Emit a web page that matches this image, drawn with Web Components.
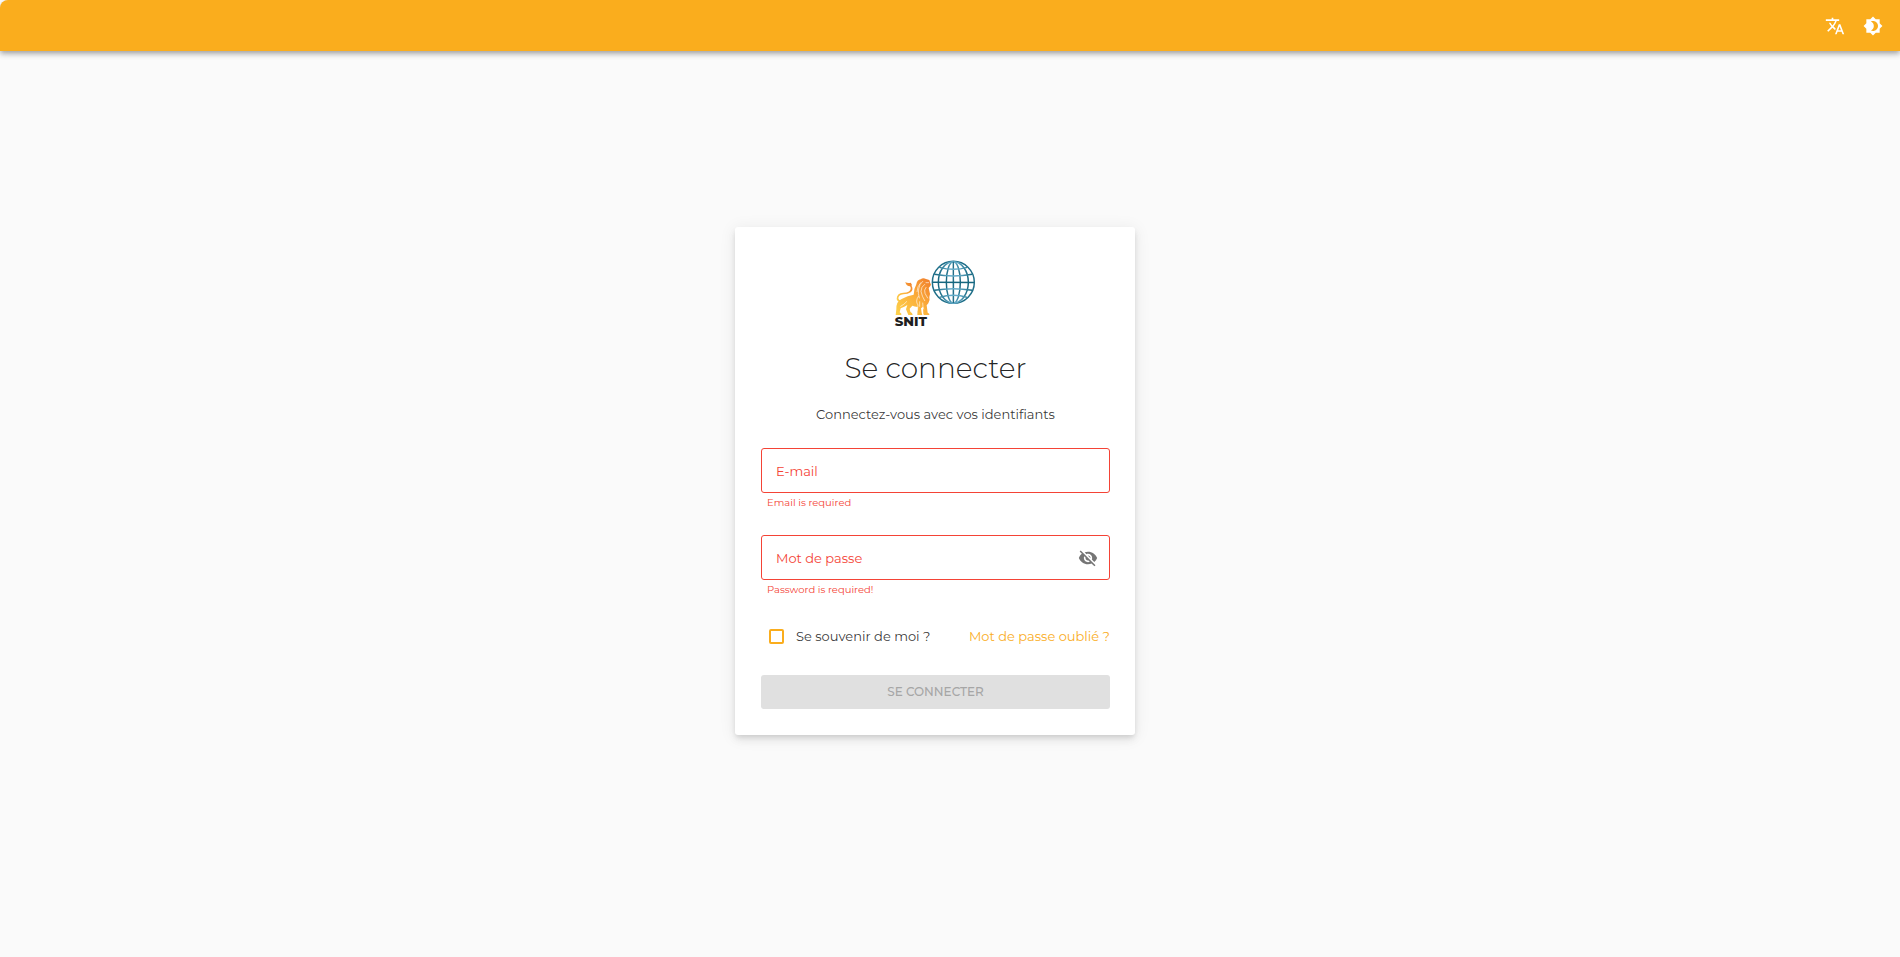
<!DOCTYPE html>
<html lang="fr">
<head>
<meta charset="utf-8">
<meta name="viewport" content="width=device-width, initial-scale=1">
<title>SNIT – Se connecter</title>
<style>
  html { background: #fff; }
  body {
    margin: 0;
    font-family: Montserrat, Inter, "Open Sans", sans-serif;
    font-size: 13px;
    line-height: 20px;
    color: rgba(0, 0, 0, .8);
    --primary: #faad1d;
    --error: #f44336;
  }
</style>
</head>
<body>
<login-page></login-page>

<script>
const define = (name, html, setup) =>
  customElements.define(name, class extends HTMLElement {
    constructor() {
      super();
      const t = document.createElement('template');
      t.innerHTML = html;
      this.attachShadow({ mode: 'open' }).append(t.content.cloneNode(true));
    }
    connectedCallback() { if (setup) setup(this, this.shadowRoot); }
  });

define('icon-button', `
  <style>
    :host { display: block; }
    button { display: flex; padding: 9px; border: 0; background: none; color: inherit; cursor: pointer; border-radius: 50%; }
    svg { width: 20px; height: 20px; fill: currentColor; }
  </style>
  <button type="button"><svg viewBox="0 0 24 24" aria-hidden="true"><path/></svg></button>`,
  (host, root) => {
    root.querySelector('path').setAttribute('d', host.getAttribute('path'));
    root.querySelector('button').setAttribute('aria-label', host.getAttribute('label'));
  });

define('top-bar', `
  <style>
    :host {
      display: flex; justify-content: flex-end; align-items: center;
      height: 51px; padding: 0 8px; box-sizing: border-box;
      background: var(--primary); color: #fff; border-top-left-radius: 8px;
      box-shadow: 0 2px 4px -1px rgba(0,0,0,.2), 0 4px 5px rgba(0,0,0,.14), 0 1px 10px rgba(0,0,0,.12);
    }
  </style>
  <slot></slot>`);

define('snit-logo', `
  <style>
    :host { display: block; }
    svg { display: block; width: 82px; height: 68px; }
    text { font-family: Montserrat, Inter, sans-serif; font-weight: 800; font-size: 40px; fill: #1e1e1e; }
  </style>
  <svg viewBox="45 29 246 204" overflow="visible" role="img" aria-label="SNIT">
    <defs>
      <linearGradient id="fur" x1="0" y1="1" x2="1" y2="0">
        <stop offset="0" stop-color="#fdd34c"/><stop offset=".5" stop-color="#fbb03b"/><stop offset="1" stop-color="#f07c2b"/>
      </linearGradient>
      <linearGradient id="sea">
        <stop offset="0" stop-color="#16677f"/><stop offset=".42" stop-color="#65acc9"/>
        <stop offset=".65" stop-color="#62a9c6"/><stop offset="1" stop-color="#16677f"/>
      </linearGradient>
    </defs>
    <g fill="none" stroke="url(#sea)" stroke-width="4.4">
      <circle cx="220" cy="96" r="63" stroke="#1f6f89"/>
      <ellipse cx="220" cy="96" rx="45" ry="62"/>
      <ellipse cx="220" cy="96" rx="21" ry="62"/>
      <path d="M220 34 220.2 158" stroke="#246f89"/>
      <path d="M158 96 282 96.2" stroke="#16677f"/>
      <path d="M163 72Q220 82 277 72M163 120Q220 110 277 120M178 51Q220 63 262 51M178 141Q220 129 262 141"/>
    </g>
    <path d="M76 95Q82 99 92 97Q97 101 95 107Q101 118 92 126Q84 132 70 132Q56 134 55 144Q56 151 64 150L67 155Q52 157 50 146Q50 128 70 127Q90 127 92 116Q93 112 90 108Q79 108 76 95Z" fill="url(#fur)"/>
    <path d="M47 194L49 177Q48 153 65 146Q83 136 101 133Q102 114 109 102Q111 89 122 87Q129 81 138 86L148 89L151 99Q155 102 151 107L146 113L148 122Q152 130 148 140Q151 150 145 159L140 165L143 187Q150 190 148 194H132L130 191L129 169L123 174L125 187L127 194H112L113 170Q103 169 97 166L89 175L91 184Q98 188 98 194H85L78 177L82 164Q74 169 62 174L59 186Q66 190 64 194Z" fill="url(#fur)"/>
    <g fill="none" stroke="#fff" stroke-width="1.8" stroke-linecap="round">
      <path d="M128 93Q118 101 116 116Q113 129 118 143M134 102Q123 109 123 123Q126 138 134 151M138 111Q131 119 135 129L143 143M122 97Q111 109 111 124M115 138Q105 153 114 164L112 180M119 154V168M128 158Q128 170 131 176M80 154Q72 163 62 168M138 97H146"/>
    </g>
    <text x="44" y="226">SNIT</text>
  </svg>`);

define('login-field', `
  <style>
    :host { display: block; }
    .box { display: grid; grid-template-columns: 1fr auto; align-items: center; height: 45px; box-sizing: border-box; border: 1px solid var(--error); border-radius: 3px; }
    input { grid-area: 1 / 1; min-width: 0; height: 43px; box-sizing: border-box; border: 0; outline: 0; background: none; padding: 0 14px; font: inherit; color: inherit; }
    label { grid-area: 1 / 1; padding-left: 14px; color: var(--error); pointer-events: none; }
    input:focus + label, input:valid + label { visibility: hidden; }
    slot { display: block; grid-area: 1 / 2; padding-right: 2px; color: #757575; }
    p { margin: 0; padding: 2px 6px 0; height: 42px; box-sizing: border-box; font-size: 10px; line-height: 16px; color: var(--error); }
  </style>
  <div class="box">
    <input id="field" required aria-describedby="help"><label for="field"></label>
    <slot></slot>
  </div>
  <p id="help"></p>`,
  (host, root) => {
    root.querySelector('input').type = host.getAttribute('type');
    root.querySelector('label').textContent = host.getAttribute('label');
    root.querySelector('p').textContent = host.getAttribute('error');
  });

define('remember-check', `
  <style>
    :host { display: flex; align-items: center; gap: 12px; padding-left: 8px; }
    input { appearance: none; width: 15px; height: 15px; margin: 0; border: 2px solid var(--primary); border-radius: 2px; }
    input:checked { background: var(--primary); }
  </style>
  <input type="checkbox" id="remember"><label for="remember"><slot></slot></label>`);

define('login-card', `
  <style>
    :host {
      display: block; width: 400px; max-width: 100%; box-sizing: border-box; padding: 33px 25px 26px 26px;
      background: #fff; border-radius: 3px;
      box-shadow: 0 3px 5px -1px rgba(0,0,0,.1), 0 5px 8px rgba(0,0,0,.06), 0 2px 16px 2px rgba(0,0,0,.06);
    }
    snit-logo { display: flex; justify-content: center; }
    h1 { margin: 18px 0 0; font-size: 28px; line-height: 44px; font-weight: 300; text-align: center; color: rgba(0,0,0,.87); }
    .lead { margin: 14px 0 0; text-align: center; }
    form { margin-top: 24px; }
    .row { display: flex; justify-content: space-between; align-items: center; height: 28px; }
    a { color: var(--primary); text-decoration: none; }
    .submit {
      display: block; width: 100%; height: 34px; margin-top: 25px; padding: 0; border: 0; border-radius: 3px;
      background: #e0e0e0; color: #a6a6a6; font: inherit; font-size: 12px; font-weight: 500; text-transform: uppercase;
    }
  </style>
  <snit-logo></snit-logo>
  <h1>Se connecter</h1>
  <p class="lead">Connectez-vous avec vos identifiants</p>
  <form novalidate>
    <login-field type="email" label="E-mail" error="Email is required"></login-field>
    <login-field type="password" label="Mot de passe" error="Password is required!">
      <icon-button label="Afficher le mot de passe" path="M12 7c2.76 0 5 2.24 5 5 0 .65-.13 1.26-.36 1.83l2.92 2.92c1.51-1.26 2.7-2.89 3.43-4.75-1.73-4.39-6-7.5-11-7.5-1.4 0-2.74.25-3.98.7l2.16 2.16C10.74 7.13 11.35 7 12 7zM2 4.27l2.28 2.28.46.46C3.08 8.3 1.78 10.02 1 12c1.73 4.39 6 7.5 11 7.5 1.55 0 3.03-.3 4.38-.84l.42.42L19.73 22 21 20.73 3.27 3 2 4.27zM7.53 9.8l1.55 1.55c-.05.21-.08.43-.08.65 0 1.66 1.34 3 3 3 .22 0 .44-.03.65-.08l1.55 1.55c-.67.33-1.41.53-2.2.53-2.76 0-5-2.24-5-5 0-.79.2-1.53.53-2.2zm4.31-.78l3.15 3.15.02-.16c0-1.66-1.34-3-3-3l-.17.01z"></icon-button>
    </login-field>
    <div class="row">
      <remember-check>Se souvenir de moi ?</remember-check>
      <a href="#oubli">Mot de passe oublié ?</a>
    </div>
    <button class="submit" disabled>Se connecter</button>
  </form>`);

define('login-page', `
  <style>
    :host { display: flex; flex-direction: column; min-height: 100vh; background: #fafafa; border-top-left-radius: 8px; }
    main { flex: 1; display: flex; align-items: center; justify-content: center; padding: 0 30px 46px 0; }
  </style>
  <top-bar>
    <icon-button label="Langue" path="M12.87 15.07l-2.54-2.51.03-.03c1.74-1.94 2.98-4.17 3.71-6.53H17V4h-7V2H8v2H1v1.99h11.17C11.5 7.92 10.44 9.75 9 11.35 8.07 10.32 7.3 9.19 6.69 8h-2c.73 1.63 1.73 3.17 2.98 4.56l-5.09 5.02L4 19l5-5 3.11 3.11.76-2.04zM18.5 10h-2L12 22h2l1.12-3h4.75L21 22h2l-4.5-12zm-2.62 7l1.62-4.33L19.12 17h-3.24z"></icon-button>
    <icon-button label="Thème" path="M20 8.69V4h-4.69L12 .69 8.69 4H4v4.69L.69 12 4 15.31V20h4.69L12 23.31 15.31 20H20v-4.69L23.31 12 20 8.69zM12 18c-.89 0-1.74-.2-2.5-.55C11.56 16.5 13 14.42 13 12s-1.44-4.5-3.5-5.45C10.26 6.2 11.11 6 12 6c3.31 0 6 2.69 6 6s-2.69 6-6 6z"></icon-button>
  </top-bar>
  <main><login-card></login-card></main>`);
</script>
</body>
</html>
